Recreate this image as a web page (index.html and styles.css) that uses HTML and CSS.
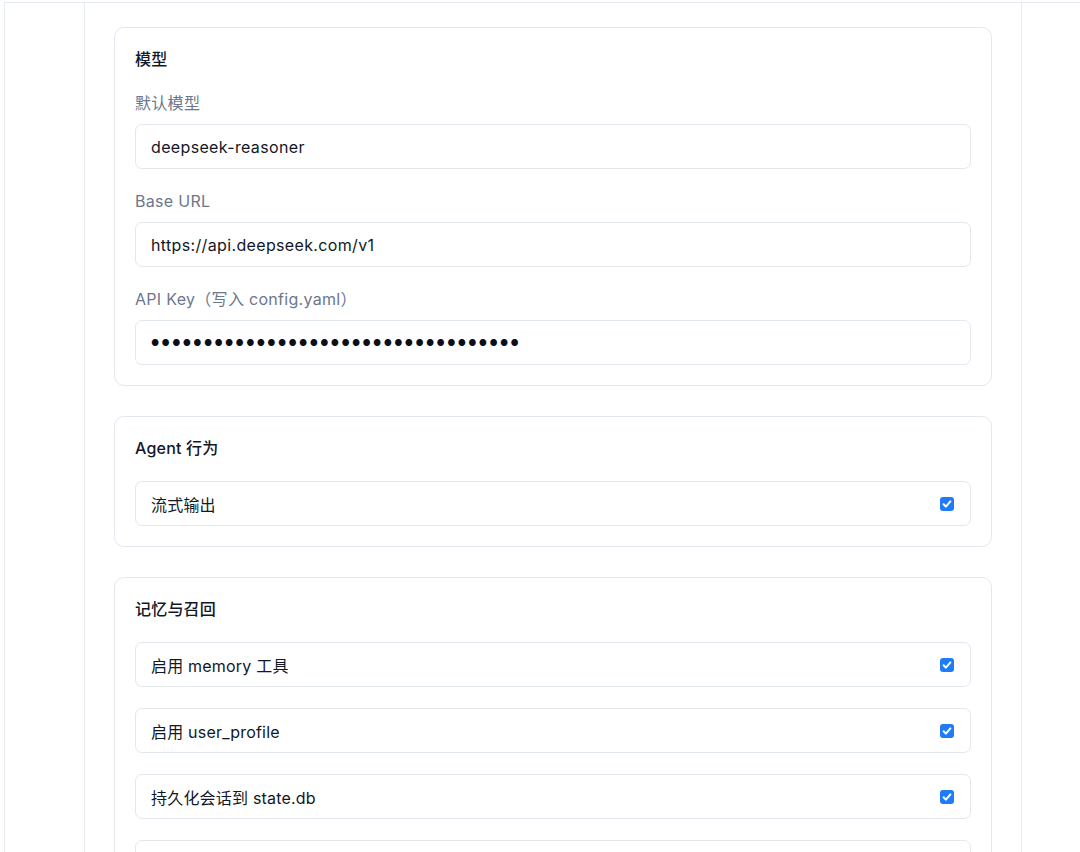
FILE: index.html
```html
<!DOCTYPE html>
<html lang="zh-CN">
<head>
  <meta charset="UTF-8" />
  <meta name="viewport" content="width=device-width, initial-scale=1" />
  <title>设置</title>
  <link rel="stylesheet" href="styles.css">
</head>
<body>
  <div class="frame">
    <main class="panel">
      <section class="card">
        <h3>模型</h3>
        <div class="field">
          <label for="model">默认模型</label>
          <input type="text" id="model" value="deepseek-reasoner" />
        </div>
        <div class="field">
          <label for="baseUrl">Base URL</label>
          <input type="text" id="baseUrl" value="https://api.deepseek.com/v1" />
        </div>
        <div class="field">
          <label for="apiKey">API Key（写入 config.yaml）</label>
          <div class="input secret" id="apiKey">●●●●●●●●●●●●●●●●●●●●●●●●●●●●●●●●●●●</div>
        </div>
      </section>

      <section class="card">
        <h3>Agent 行为</h3>
        <label class="toggle-row">
          <span>流式输出</span>
          <span class="check"><svg viewBox="0 0 14 14"><path d="M3.6 7.2l2.3 2.4 4.5-5.2" /></svg></span>
        </label>
      </section>

      <section class="card">
        <h3>记忆与召回</h3>
        <label class="toggle-row">
          <span>启用 memory 工具</span>
          <span class="check"><svg viewBox="0 0 14 14"><path d="M3.6 7.2l2.3 2.4 4.5-5.2" /></svg></span>
        </label>
        <label class="toggle-row">
          <span>启用 user_profile</span>
          <span class="check"><svg viewBox="0 0 14 14"><path d="M3.6 7.2l2.3 2.4 4.5-5.2" /></svg></span>
        </label>
        <label class="toggle-row">
          <span>持久化会话到 state.db</span>
          <span class="check"><svg viewBox="0 0 14 14"><path d="M3.6 7.2l2.3 2.4 4.5-5.2" /></svg></span>
        </label>
        <label class="toggle-row">
          <span>注入召回上下文</span>
          <span class="check"><svg viewBox="0 0 14 14"><path d="M3.6 7.2l2.3 2.4 4.5-5.2" /></svg></span>
        </label>
      </section>
    </main>
  </div>
</body>
</html>
```

FILE: styles.css
```css
* {
  box-sizing: border-box;
}

html, body {
  margin: 0;
  height: 852px;
  overflow: hidden;
  background: #fff;
}

body {
  font-family: Inter, "Noto Sans CJK SC", sans-serif;
  color: #111827;
}

.frame {
  margin: 2px 0 0 4px;
  border-top: 1px solid #e6ebf2;
  border-left: 1px solid #e6ebf2;
  height: 900px;
}

.panel {
  margin-left: 79px;
  width: 938px;
  height: 100%;
  padding: 24px 29px;
  border-left: 1px solid #e6ebf2;
  border-right: 1px solid #e6ebf2;
}

.card {
  border: 1px solid #e3e8ef;
  border-radius: 10px;
  padding: 19px 20px 20px;
  margin-bottom: 30px;
}

.card h3 {
  margin: 0 0 20px;
  font-size: 16px;
  line-height: 25px;
  font-weight: 500;
  letter-spacing: 0.2px;
}

.field + .field,
.toggle-row + .toggle-row {
  margin-top: 21px;
}

.field label {
  display: block;
  font-size: 16px;
  line-height: 22px;
  letter-spacing: 0.3px;
  color: #6b778c;
  margin-bottom: 10px;
}

.field input,
.input {
  display: block;
  width: 100%;
  height: 45px;
  padding: 0 15px;
  border: 1px solid #e3e8ef;
  border-radius: 7px;
  font-family: inherit;
  font-size: 16px;
  letter-spacing: 0.35px;
  color: #111827;
  background: #fff;
  outline: none;
}

.secret {
  display: flex;
  align-items: center;
  font-size: 9px;
  letter-spacing: 2.35px;
  color: #0b0f19;
}

.toggle-row {
  display: flex;
  align-items: center;
  justify-content: space-between;
  height: 45px;
  padding: 0 16px 0 15px;
  border: 1px solid #e3e8ef;
  border-radius: 7px;
  font-size: 16px;
  letter-spacing: 0.2px;
}

.check {
  width: 14px;
  height: 14px;
  border-radius: 3px;
  background: #1f7cf6;
  display: flex;
}

.check svg {
  width: 14px;
  height: 14px;
  fill: none;
  stroke: #fff;
  stroke-width: 2;
  stroke-linecap: round;
  stroke-linejoin: round;
}
```
